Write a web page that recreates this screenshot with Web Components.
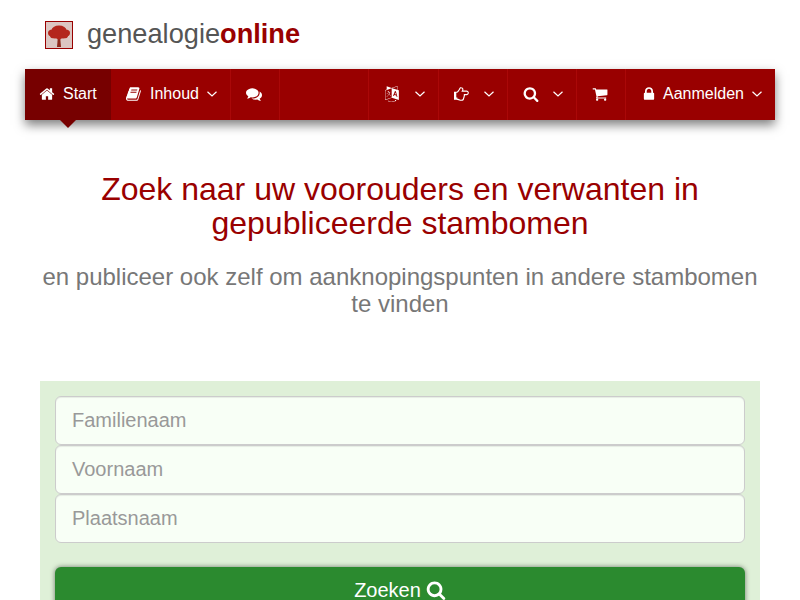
<!DOCTYPE html>
<html lang="nl">
<head>
<meta charset="utf-8">
<title>Genealogie Online</title>
<style>
    html, body { margin: 0; height: 600px; overflow: hidden; background: #fff; }
    body { font-family: "Liberation Sans", Arial, sans-serif; }
    go-page { display: block; }
</style>
</head>
<body>
<go-page>
    <go-logo slot="logo"></go-logo>
    <go-nav slot="nav">
        <go-nav-item active icon="home" width="86">Start</go-nav-item>
        <go-nav-item icon="book" caret width="120">Inhoud</go-nav-item>
        <go-nav-item icon="comments" width="49"></go-nav-item>
        <go-nav-item spacer width="89"></go-nav-item>
        <go-nav-item icon="language" caret width="70"></go-nav-item>
        <go-nav-item icon="hand" caret width="69"></go-nav-item>
        <go-nav-item icon="search" caret width="69"></go-nav-item>
        <go-nav-item icon="cart" width="49"></go-nav-item>
        <go-nav-item icon="lock" caret grow>Aanmelden</go-nav-item>
    </go-nav>
    <go-hero slot="hero">
        <span slot="title">Zoek naar uw voorouders en verwanten in gepubliceerde stambomen</span>
        en publiceer ook zelf om aanknopingspunten in andere stambomen te vinden
    </go-hero>
    <go-search slot="search">
        <go-field>Familienaam</go-field>
        <go-field>Voornaam</go-field>
        <go-field>Plaatsnaam</go-field>
    </go-search>
</go-page>

<script>
const ICONS = {
    home: 'M1472 992v480q0 26-19 45t-45 19h-384v-384h-256v384h-384q-26 0-45-19t-19-45v-480q0-1 .5-3t.5-3l575-474 575 474q1 2 1 6zm223-69l-62 74q-8 9-21 11h-3q-13 0-21-7l-692-577-692 577q-12 8-24 7-13-2-21-11l-62-74q-8-10-7-23.500t11-21.500l719-599q32-26 76-26t76 26l244 204v-195q0-14 9-23t23-9h192q14 0 23 9t9 23v408l219 182q10 8 11 21.500t-7 23.500z',
    book: 'M1639 478q40 57 18 129l-275 906q-19 64-76.500 107.500t-122.500 43.500h-923q-77 0-148.500-53.500t-99.500-131.500q-24-67-2-127 0-4 3-27t4-37q1-8-3-21.500t-3-19.500q2-11 8-21t16.500-23.500 16.500-23.500q23-38 45-91.500t30-91.500q3-10 .5-30t-.5-28q3-11 17-28t17-23q21-36 42-92t25-90q1-9-2.500-32t.5-28q4-13 22-30.500t22-22.500q19-26 42.500-84.500t27.500-96.500q1-8-3-25.500t-2-26.500q2-8 9-18t18-23 17-21q8-12 16.500-30.500t15-35 16-36 19.500-32 26.500-23.500 36-11.500 47.500 5.500l-1 3q38-9 51-9h761q74 0 114 56t18 130l-274 906q-36 119-71.500 153.500t-128.500 34.500h-869q-27 0-38 15-11 16-1 43 24 70 144 70h923q29 0 56-15.500t35-41.500l300-987q7-22 5-57 38 15 59 43zm-1064 2q-4 13 2 22.500t20 9.500h608q13 0 25.500-9.500t16.500-22.500l21-64q4-13-2-22.500t-20-9.500h-608q-13 0-25.500 9.500t-16.500 22.500zm-83 256q-4 13 2 22.500t20 9.500h608q13 0 25.500-9.500t16.500-22.500l21-64q4-13-2-22.500t-20-9.500h-608q-13 0-25.500 9.500t-16.500 22.500z',
    comments: 'M1408 768q0 139-94 257t-256.500 186.500-353.500 68.500q-86 0-176-16-124 88-278 128-36 9-86 16h-3q-11 0-20.500-8t-11.500-21q-1-3-1-6.500t.5-6.500 2-6l2.500-5 3.500-5.500 4-5 4.500-5 4-4.500q5-6 23-25t26-29.500 22.500-29 25-38.500 20.500-44q-124-72-195-177t-71-224q0-139 94-257t256.500-186.500 353.500-68.500 353.500 68.500 256.500 186.500 94 257zm384 256q0 120-71 224.500t-195 176.500q10 24 20.500 44t25 38.500 22.500 29 26 29.500 23 25q1 1 4 4.500t4.500 5 4 5 3.500 5.500l2.500 5 2 6 .5 6.500-1 6.500q-3 14-13 22t-22 7q-50-7-86-16-154-40-278-128-90 16-176 16-271 0-472-132 58 4 88 4 161 0 309-45t264-129q125-92 192-212t67-254q0-77-23-152 129 71 204 178t75 230z',
    language: 'M782 1078q-1 3-12.500-.5t-31.500-11.500l-20-9q-44-20-87-49-7-5-41-31.500t-38-28.500q-67 103-134 181-81 95-105 110-4 2-19.500 4t-18.500 0q6-4 82-92 21-24 85.500-115t78.500-118q17-30 51-98.500t36-77.500q-8-1-110 33-8 2-27.500 7.500t-34.500 9.500-17 5q-2 2-2 10.500t-1 9.500q-5 10-31 15-23 7-47 0-18-4-28-21-4-6-5-23 6-2 24.500-5t29.500-6q58-16 105-32 100-35 102-35 10-2 43-19.500t44-21.500q9-3 21.500-8t14.500-5.500 6 .5q2 12-1 33 0 2-12.500 27t-26.500 53.500-17 33.500q-25 50-77 131l64 28q12 6 74.500 32t67.500 28q4 1 10.500 25.500t4.500 30.500zm-205-486q3 15-4 28-12 23-50 38-30 12-60 12-26-3-49-26-14-15-18-41l1-3q3 3 19.500 5t26.500 0 58-16q36-12 55-14 17 0 21 17zm698 129l63 227-139-42zm-1108 800l694-232v-1032l-694 233v1031zm1241-317l102 31-181-657-100-31-216 536 102 31 45-110 211 65zm-503-962l573 184v-380zm311 1323l158 13-54 160-40-66q-130 83-276 108-58 12-91 12h-84q-79 0-199.500-39t-183.500-85q-8-7-8-16 0-8 5-13.500t13-5.500q4 0 18 7.500t30.500 16.500 20.500 11q73 37 159.500 61.500t157.500 24.500q95 0 167-14.500t157-50.500q15-7 30.500-15.500t34-19 28.500-16.500zm448-1079v1079l-774-246q-14 6-375 127.500t-368 121.500q-13 0-18-13 0-1-1-3v-1078q3-9 4-10 5-6 20-11 107-36 149-50v-384l558 198q2 0 160.500-55t316-108.500 161.500-53.500q20 0 20 21v418z',
    hand: 'M384 1344q0-26-19-45t-45-19-45 19-19 45 19 45 45 19 45-19 19-45zm1152-576q0-51-39-89.500t-89-38.500h-576q0-20 15-48.500t33-55 33-68 15-84.500q0-67-44.500-97.500t-115.500-30.500q-24 0-90 139-24 44-37 65-40 64-112 145-71 81-101 106-69 57-140 57h-32v640h32q72 0 167 32t193.500 64 179.500 32q189 0 189-167 0-26-5-56 30-16 47.500-52.500t17.500-73.500-18-69q53-50 53-119 0-25-10-55.500t-25-47.500h331q52 0 90-38t38-90zm128-1q0 105-76 181t-181 76h-169q-4 62-37 119 3 21 3 43 0 101-60 178 1 139-85 219.500t-227 80.500q-133 0-322-69-164-59-223-59h-288q-53 0-90.500-37.500t-37.500-90.500v-640q0-53 37.500-90.500t90.500-37.500h288q10 0 21.500-4.500t23.500-14 22.500-18 24-22.500 20.500-21.500 19-21.500 14-17q65-74 100-129 13-21 33-62t37-72 40.500-63 55-49.500 69.500-17.500q125 0 206.500 67t81.500 189q0 68-22 128h374q104 0 180 76t76 179z',
    search: 'M1216 832q0-185-131.500-316.500t-316.500-131.500-316.500 131.500-131.500 316.500 131.500 316.500 316.500 131.500 316.500-131.500 131.500-316.500zm512 832q0 52-38 90t-90 38q-54 0-90-38l-343-342q-179 124-399 124-143 0-273.500-55.500t-225-150-150-225-55.500-273.500 55.500-273.500 150-225 225-150 273.500-55.500 273.500 55.500 225 150 150 225 55.500 273.500q0 220-124 399l343 343q37 37 37 90z',
    cart: 'M704 1536q0 52-38 90t-90 38-90-38-38-90 38-90 90-38 90 38 38 90zm896 0q0 52-38 90t-90 38-90-38-38-90 38-90 90-38 90 38 38 90zm128-1088v512q0 24-16.500 42.500t-40.500 21.500l-1044 122q13 60 13 70 0 16-24 64h920q26 0 45 19t19 45-19 45-45 19h-1024q-26 0-45-19t-19-45q0-11 8-31.500t16-36 21.500-40 15.500-29.500l-177-823h-204q-26 0-45-19t-19-45 19-45 45-19h256q16 0 28.500 6.500t19.500 15.500 13 24.500 8 26 5.500 29.500 4.500 26h1201q26 0 45 19t19 45z',
    lock: 'M640 768h512v-192q0-106-75-181t-181-75-181 75-75 181v192zm832 96v576q0 40-28 68t-68 28h-960q-40 0-68-28t-28-68v-576q0-40 28-68t68-28h32v-192q0-184 132-316t316-132 316 132 132 316v192h32q40 0 68 28t28 68z'
};

function iconSvg(name, size) {
    return `<svg width="${size}" height="${size}" viewBox="0 0 1792 1792" fill="currentColor" aria-hidden="true"><path d="${ICONS[name]}"/></svg>`;
}

class GoPage extends HTMLElement {
    constructor() {
        super();
        this.attachShadow({ mode: 'open' });
        this.shadowRoot.innerHTML = `
            <style>
                :host { display: block; }
                .brand { padding: 21px 45px 20px; }
                .nav { padding: 0 25px; }
                .hero { padding: 52px 40px 0; }
                .search { padding: 64px 40px 0; }
            </style>
            <div class="brand"><slot name="logo"></slot></div>
            <div class="nav"><slot name="nav"></slot></div>
            <div class="hero"><slot name="hero"></slot></div>
            <div class="search"><slot name="search"></slot></div>
        `;
    }
}

class GoLogo extends HTMLElement {
    constructor() {
        super();
        this.attachShadow({ mode: 'open' });
        this.shadowRoot.innerHTML = `
            <style>
                :host { display: flex; gap: 14px; height: 28px; }
                svg { display: block; flex: none; }
                .name { font-size: 27.2px; line-height: 26px; color: #555; }
                b { color: #990000; }
            </style>
            <svg width="28" height="28" viewBox="0 0 28 28">
                <defs><filter id="soft"><feGaussianBlur stdDeviation=".5"/></filter></defs>
                <rect x=".5" y=".5" width="27" height="27" fill="#dcc6c2" stroke="#990000"/>
                <g filter="url(#soft)" fill="#b4281b">
                    <path d="M12.800 17h2.400l.8 9h-4z" fill="#8e2a1c"/>
                    <path d="M9 15.500l4 3h2l4-3z"/>
                    <ellipse cx="7.500" cy="12" rx="4.500" ry="3.500"/>
                    <ellipse cx="14" cy="9.500" rx="7.500" ry="5"/>
                    <ellipse cx="20.500" cy="12" rx="4.500" ry="3.500"/>
                    <ellipse cx="10" cy="15" rx="5" ry="2.500"/>
                    <ellipse cx="18" cy="15" rx="5" ry="2.500"/>
                </g>
            </svg>
            <span class="name">genealogie<b>online</b></span>
        `;
    }
}

class GoNav extends HTMLElement {
    constructor() {
        super();
        this.attachShadow({ mode: 'open' });
        this.shadowRoot.innerHTML = `
            <style>
                :host {
                    display: flex;
                    height: 51px;
                    background: #990000;
                    box-shadow: 0 5px 10px rgba(0,0,0,0.5);
                    color: #fff;
                    font-size: 16px;
                }
            </style>
            <slot></slot>
        `;
    }
}

class GoNavItem extends HTMLElement {
    constructor() {
        super();
        this.attachShadow({ mode: 'open' });
        const icon = this.getAttribute('icon');
        const caret = this.hasAttribute('caret');
        this.shadowRoot.innerHTML = `
            <style>
                :host {
                    display: flex;
                    position: relative;
                    box-sizing: border-box;
                    align-items: center;
                    padding: 0 0 2px 15px;
                    border-right: 1px solid #aa0808;
                    flex: none;
                }
                :host([grow]) { flex: 1; border-right: 0; }
                :host([active]) { background: #770000; border-right-color: #770000; padding-left: 14px; }
                :host([active])::after {
                    content: "";
                    position: absolute;
                    left: 35px;
                    top: 51px;
                    border: 8px solid transparent;
                    border-top-color: #770000;
                    border-bottom: 0;
                }
                svg { display: block; flex: none; }
                .label { margin-left: 8px; white-space: nowrap; }
                :host([grow]) .label { margin-left: 6px; }
                .caret { margin-left: auto; margin-right: 13px; }
            </style>
            ${icon ? iconSvg(icon, 16) : ''}
            <span class="label"><slot></slot></span>
            ${caret ? `<svg class="caret" width="10" height="6" viewBox="0 0 10 6" fill="none" stroke="currentColor" stroke-width="1.200"><path d="M.5.8 5 5 9.500.8"/></svg>` : ''}
        `;
        if (this.hasAttribute('width')) {
            this.style.width = this.getAttribute('width') + 'px';
        }
    }
}

class GoHero extends HTMLElement {
    constructor() {
        super();
        this.attachShadow({ mode: 'open' });
        this.shadowRoot.innerHTML = `
            <style>
                :host { display: block; text-align: center; }
                h1 { margin: 0 0 23px; font-size: 32px; line-height: 34px; font-weight: 400; color: #990000; }
                p { margin: 0; font-size: 24px; line-height: 27px; color: #777; }
            </style>
            <h1><slot name="title"></slot></h1>
            <p><slot></slot></p>
        `;
    }
}

class GoField extends HTMLElement {
    constructor() {
        super();
        this.attachShadow({ mode: 'open' });
        this.shadowRoot.innerHTML = `
            <style>
                :host {
                    display: block;
                    box-sizing: border-box;
                    height: 49px;
                    padding: 0 16px;
                    background: #f8fff6;
                    border: 1px solid #ccc;
                    border-radius: 6px;
                    box-shadow: inset 0 1px 1px rgba(0,0,0,0.075);
                    font-size: 20px;
                    line-height: 46px;
                    color: #999;
                }
            </style>
            <slot></slot>
        `;
    }
}

class GoSearch extends HTMLElement {
    constructor() {
        super();
        this.attachShadow({ mode: 'open' });
        this.shadowRoot.innerHTML = `
            <style>
                :host { display: block; background: #dff0d8; padding: 15px 15px 40px; }
                .fields { display: flex; flex-direction: column; }
                button {
                    display: flex;
                    align-items: center;
                    justify-content: center;
                    gap: 5px;
                    box-sizing: border-box;
                    width: 100%;
                    height: 46px;
                    margin-top: 24px;
                    padding: 0;
                    background: #2b8a2f;
                    color: #fff;
                    border: 0;
                    border-radius: 6px;
                    box-shadow: 0 0 5px rgba(0,0,0,0.5);
                    font: 20px "Liberation Sans", Arial, sans-serif;
                }
                svg { display: block; }
            </style>
            <div class="fields"><slot></slot></div>
            <button type="submit">Zoeken ${iconSvg('search', 20)}</button>
        `;
    }
}

customElements.define('go-page', GoPage);
customElements.define('go-logo', GoLogo);
customElements.define('go-nav', GoNav);
customElements.define('go-nav-item', GoNavItem);
customElements.define('go-hero', GoHero);
customElements.define('go-field', GoField);
customElements.define('go-search', GoSearch);
</script>
</body>
</html>
